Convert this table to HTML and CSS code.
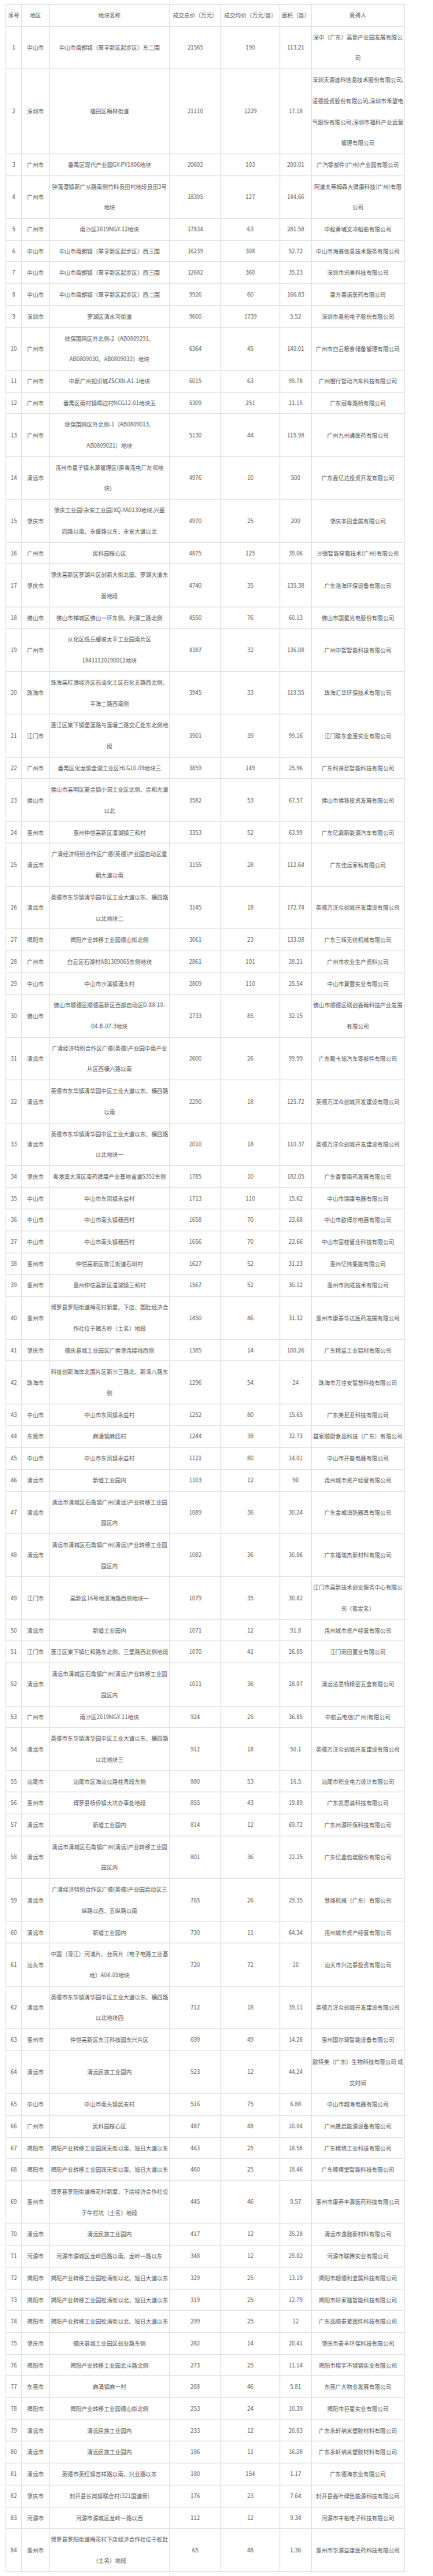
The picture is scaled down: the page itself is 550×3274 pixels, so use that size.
FILE: index.html
```html
<!DOCTYPE html>
<html lang="zh-CN">
<head>
<meta charset="utf-8">
<title>广东省工业用地成交表</title>
<link rel="stylesheet" href="styles.css">
</head>
<body>
<div class="page">
<table class="land-table">
<colgroup>
<col class="c-no"><col class="c-area"><col class="c-name"><col class="c-total"><col class="c-avg"><col class="c-size"><col class="c-buyer">
</colgroup>
<thead>
<tr><th>序号</th><th>地区</th><th>地块名称</th><th>成交总价（万元）</th><th>成交均价（万元/亩）</th><th>面积（亩）</th><th>竞得人</th></tr>
</thead>
<tbody>
<tr><td>1</td><td>中山市</td><td>中山市南朗镇（翠亨新区起步区）东二围</td><td>21565</td><td>190</td><td>113.21</td><td>深中（广东）高新产业园发展有限公<br>司</td></tr>
<tr><td>2</td><td>深圳市</td><td>福田区梅林街道</td><td>21110</td><td>1229</td><td>17.18</td><td>深圳天源迪科信息技术股份有限公司,<br>诺德投资股份有限公司,深圳市禾望电<br>气股份有限公司,深圳市福科产业运营<br>管理有限公司</td></tr>
<tr><td>3</td><td>广州市</td><td>番禺区现代产业园GY-PY1806地块</td><td>20602</td><td>103</td><td>200.01</td><td>广汽零部件(广州)产业园有限公司</td></tr>
<tr><td>4</td><td>广州市</td><td>钟落潭镇新广从路南侧竹料良田村地段良田3号<br>地块</td><td>18395</td><td>127</td><td>144.66</td><td>阿道夫蒂姆森大健康科技(广州)有限<br>公司</td></tr>
<tr><td>5</td><td>广州市</td><td>南沙区2019NGY-12地块</td><td>17834</td><td>63</td><td>281.58</td><td>中船黄埔文冲船舶有限公司</td></tr>
<tr><td>6</td><td>中山市</td><td>中山市南朗镇（翠亨新区起步区）西三围</td><td>16239</td><td>308</td><td>52.72</td><td>中山市海雅信息技术服务有限公司</td></tr>
<tr><td>7</td><td>中山市</td><td>中山市南朗镇（翠亨新区起步区）西三围</td><td>12682</td><td>360</td><td>35.23</td><td>深圳市讯美科技有限公司</td></tr>
<tr><td>8</td><td>中山市</td><td>中山市南朗镇（翠亨新区起步区）西二围</td><td>9926</td><td>60</td><td>166.83</td><td>康方喜诺医药有限公司</td></tr>
<tr><td>9</td><td>深圳市</td><td>罗湖区清水河街道</td><td>9600</td><td>1739</td><td>5.52</td><td>深圳市奥拓电子股份有限公司</td></tr>
<tr><td>10</td><td>广州市</td><td>综保围网区外北侧-2（AB0809291、<br>AB0809030、AB0809033）地块</td><td>6364</td><td>45</td><td>140.01</td><td>广州市白云粮食储备管理有限公司</td></tr>
<tr><td>11</td><td>广州市</td><td>中新广州知识城ZSCXN-A1-1地块</td><td>6015</td><td>63</td><td>95.78</td><td>广州橙行智动汽车科技有限公司</td></tr>
<tr><td>12</td><td>广州市</td><td>番禺区南村镇樟边村NCG12-01地块五</td><td>5309</td><td>251</td><td>21.15</td><td>广东冠粤路桥有限公司</td></tr>
<tr><td>13</td><td>广州市</td><td>综保围网区外北侧-1（AB0809013、<br>AB0809021）地块</td><td>5130</td><td>44</td><td>115.98</td><td>广州九州通医药有限公司</td></tr>
<tr><td>14</td><td>清远市</td><td>连州市星子镇水源管理区(原粤连电厂灰坝地<br>块）</td><td>4976</td><td>10</td><td>500</td><td>广东鑫亿达投资开发有限公司</td></tr>
<tr><td>15</td><td>肇庆市</td><td>肇庆工业园(永安工业园)XQ-YA0130地块,兴盛<br>四路以南、永盛路以东、永安大道以北</td><td>4970</td><td>25</td><td>200</td><td>肇庆本田金属有限公司</td></tr>
<tr><td>16</td><td>广州市</td><td>民科园核心区</td><td>4875</td><td>125</td><td>39.06</td><td>沙驰智能穿戴技术(广州)有限公司</td></tr>
<tr><td>17</td><td>肇庆市</td><td>肇庆高新区罗湖片区创新大街北面、罗湖大道东<br>面地段</td><td>4740</td><td>35</td><td>135.38</td><td>广东浩海环保设备有限公司</td></tr>
<tr><td>18</td><td>佛山市</td><td>佛山市禅城区佛山一环东侧、利源二路北侧</td><td>4550</td><td>76</td><td>60.13</td><td>佛山市国星光电股份有限公司</td></tr>
<tr><td>19</td><td>广州市</td><td>从化区低丘缓坡太平工业园南片区<br>18411120190012地块</td><td>4387</td><td>32</td><td>136.08</td><td>广州中智智能科技有限公司</td></tr>
<tr><td>20</td><td>珠海市</td><td>珠海高栏港经济区石油化工区石化五路西北侧、<br>平海二路西南侧</td><td>3945</td><td>33</td><td>119.55</td><td>珠海汇华环保技术有限公司</td></tr>
<tr><td>21</td><td>江门市</td><td>蓬江区棠下镇堡莲路与莲塘二路交汇处东北侧地<br>段</td><td>3901</td><td>39</td><td>99.16</td><td>江门联东金蓬实业有限公司</td></tr>
<tr><td>22</td><td>广州市</td><td>番禺区化龙镇金湖工业区HLG10-09地块三</td><td>3859</td><td>149</td><td>25.96</td><td>广东科徕尼智能科技有限公司</td></tr>
<tr><td>23</td><td>佛山市</td><td>佛山市高明区更合镇小洞工业区北侧、合和大道<br>以北</td><td>3582</td><td>53</td><td>67.57</td><td>佛山市佛铁投资发展有限公司</td></tr>
<tr><td>24</td><td>惠州市</td><td>惠州仲恺高新区潼湖镇三和村</td><td>3353</td><td>52</td><td>63.99</td><td>广东亿鼎新能源汽车有限公司</td></tr>
<tr><td>25</td><td>清远市</td><td>广清经济特别合作区广德(英德)产业园启动区星<br>朝大道以南</td><td>3155</td><td>28</td><td>112.64</td><td>广东佳远家私有限公司</td></tr>
<tr><td>26</td><td>清远市</td><td>英德市东华镇清华园中区工业大道以东、横四路<br>以北地块二</td><td>3145</td><td>18</td><td>172.74</td><td>英德万洋众创城开发建设有限公司</td></tr>
<tr><td>27</td><td>揭阳市</td><td>揭阳产业转移工业园德山街北侧</td><td>3061</td><td>23</td><td>133.08</td><td>广东三辉无纺机械有限公司</td></tr>
<tr><td>28</td><td>广州市</td><td>白云区石湖村AB1309065东侧地块</td><td>2861</td><td>101</td><td>28.21</td><td>广州市农业生产资料公司</td></tr>
<tr><td>29</td><td>中山市</td><td>中山市沙溪镇涌头村</td><td>2809</td><td>110</td><td>25.54</td><td>中山市景盟实业有限公司</td></tr>
<tr><td>30</td><td>佛山市</td><td>佛山市顺德区顺德高新区西部启动区D-X8-10-<br>04-B-07-3地块</td><td>2733</td><td>85</td><td>32.15</td><td>佛山市顺德区硕创鑫翰科技产业发展<br>有限公司</td></tr>
<tr><td>31</td><td>清远市</td><td>广清经济特别合作区广德(英德)产业园中南产业<br>片区西横六路以南</td><td>2600</td><td>26</td><td>99.99</td><td>广东戴卡旭汽车零部件有限公司</td></tr>
<tr><td>32</td><td>清远市</td><td>英德市东华镇清华园中区工业大道以东、横四路<br>以南</td><td>2290</td><td>18</td><td>125.72</td><td>英德万洋众创城开发建设有限公司</td></tr>
<tr><td>33</td><td>清远市</td><td>英德市东华镇清华园中区工业大道以东、横四路<br>以北地块一</td><td>2010</td><td>18</td><td>110.37</td><td>英德万洋众创城开发建设有限公司</td></tr>
<tr><td>34</td><td>肇庆市</td><td>粤港澳大湾区南药健康产业基地省道S352东侧</td><td>1785</td><td>10</td><td>182.05</td><td>广东香雪南药发展有限公司</td></tr>
<tr><td>35</td><td>中山市</td><td>中山市东凤镇永益村</td><td>1713</td><td>110</td><td>15.62</td><td>中山市瑞康电器有限公司</td></tr>
<tr><td>36</td><td>中山市</td><td>中山市南头镇穗西村</td><td>1658</td><td>70</td><td>23.68</td><td>中山市欧博尔电器有限公司</td></tr>
<tr><td>37</td><td>中山市</td><td>中山市南头镇穗西村</td><td>1656</td><td>70</td><td>23.66</td><td>中山市富桂管业科技有限公司</td></tr>
<tr><td>38</td><td>惠州市</td><td>仲恺高新区陈江街道石圳村</td><td>1627</td><td>52</td><td>31.23</td><td>惠州亿纬集能有限公司</td></tr>
<tr><td>39</td><td>惠州市</td><td>惠州仲恺高新区潼湖镇三和村</td><td>1567</td><td>52</td><td>30.12</td><td>惠州市则成技术有限公司</td></tr>
<tr><td>40</td><td>惠州市</td><td>博罗县罗阳街道梅花村新屋、下店、围肚经济合<br>作社位于猪古岭（土名）地段</td><td>1450</td><td>46</td><td>31.32</td><td>惠州市康泰华达医药发展有限公司</td></tr>
<tr><td>41</td><td>肇庆市</td><td>德庆县城工业园区广佛肇连接线西侧</td><td>1385</td><td>14</td><td>100.26</td><td>广东精益工业铝材有限公司</td></tr>
<tr><td>42</td><td>珠海市</td><td>科技创新海岸北围片区新沙三路北、新湾八路东<br>侧</td><td>1296</td><td>54</td><td>24</td><td>珠海市万佳安智慧科技有限公司</td></tr>
<tr><td>43</td><td>中山市</td><td>中山市东凤镇永益村</td><td>1252</td><td>80</td><td>15.65</td><td>广东美尼亚科技有限公司</td></tr>
<tr><td>44</td><td>东莞市</td><td>麻涌镇麻四村</td><td>1244</td><td>38</td><td>32.73</td><td>碧家顺厨食品科技（广东）有限公司</td></tr>
<tr><td>45</td><td>中山市</td><td>中山市东凤镇永益村</td><td>1121</td><td>80</td><td>14.01</td><td>中山市开普电器有限公司</td></tr>
<tr><td>46</td><td>清远市</td><td>新墟工业园内</td><td>1103</td><td>12</td><td>90</td><td>连州城市资产经营有限公司</td></tr>
<tr><td>47</td><td>清远市</td><td>清远市清城区石角镇广州(清远)产业转移工业园<br>园区内</td><td>1089</td><td>36</td><td>30.24</td><td>广东金威消防器具有限公司</td></tr>
<tr><td>48</td><td>清远市</td><td>清远市清城区石角镇广州(清远)产业转移工业园<br>园区内</td><td>1082</td><td>36</td><td>30.06</td><td>广东福瑞杰新材料有限公司</td></tr>
<tr><td>49</td><td>江门市</td><td>高新区16号地滨海路西侧地块一</td><td>1079</td><td>35</td><td>30.82</td><td>江门市高新技术创业服务中心有限公<br>司（暂定名）</td></tr>
<tr><td>50</td><td>清远市</td><td>新墟工业园内</td><td>1071</td><td>12</td><td>91.8</td><td>连州城市资产经营有限公司</td></tr>
<tr><td>51</td><td>江门市</td><td>蓬江区棠下镇仁和路东北侧、三堡路西北侧地段</td><td>1070</td><td>41</td><td>26.05</td><td>江门雨田置业有限公司</td></tr>
<tr><td>52</td><td>清远市</td><td>清远市清城区石角镇广州(清远)产业转移工业园<br>园区内</td><td>1011</td><td>36</td><td>28.07</td><td>清远法思特精密五金有限公司</td></tr>
<tr><td>53</td><td>广州市</td><td>南沙区2019NGY-11地块</td><td>924</td><td>25</td><td>36.85</td><td>中航云电信(广州)有限公司</td></tr>
<tr><td>54</td><td>清远市</td><td>英德市东华镇清华园中区工业大道以东、横四路<br>以北地块三</td><td>912</td><td>18</td><td>50.1</td><td>英德万洋众创城开发建设有限公司</td></tr>
<tr><td>55</td><td>汕尾市</td><td>汕尾市区海汕公路桂青段东侧</td><td>880</td><td>53</td><td>16.5</td><td>汕尾市积业电力设计有限公司</td></tr>
<tr><td>56</td><td>惠州市</td><td>博罗县杨侨镇大坑办事处地段</td><td>855</td><td>43</td><td>19.89</td><td>广东凯思诚科技有限公司</td></tr>
<tr><td>57</td><td>清远市</td><td>新墟工业园内</td><td>814</td><td>12</td><td>69.72</td><td>广东州源环保科技有限公司</td></tr>
<tr><td>58</td><td>清远市</td><td>清远市清城区石角镇广州(清远)产业转移工业园<br>园区内</td><td>801</td><td>36</td><td>22.25</td><td>广东亿晶包装股份有限公司</td></tr>
<tr><td>59</td><td>清远市</td><td>广清经济特别合作区广德(英德)产业园启动区三<br>纵路以西、五纵路以南</td><td>765</td><td>26</td><td>29.35</td><td>慧雄机械（广东）有限公司</td></tr>
<tr><td>60</td><td>清远市</td><td>新墟工业园内</td><td>730</td><td>11</td><td>64.34</td><td>连州城市资产经营有限公司</td></tr>
<tr><td>61</td><td>汕头市</td><td>中国（濠江）河浦片、台商片（电子电路工业基<br>地）A04-03地块</td><td>720</td><td>72</td><td>10</td><td>汕头市兴达泰投资有限公司</td></tr>
<tr><td>62</td><td>清远市</td><td>英德市东华镇清华园中区工业大道以东、横四路<br>以北地块四</td><td>712</td><td>18</td><td>39.11</td><td>英德万洋众创城开发建设有限公司</td></tr>
<tr><td>63</td><td>惠州市</td><td>仲恺高新区东江科技园东兴片区</td><td>699</td><td>49</td><td>14.28</td><td>惠州国尔琦智能设备有限公司</td></tr>
<tr><td>64</td><td>清远市</td><td>清远民族工业园内</td><td>523</td><td>12</td><td>44.24</td><td>欧特美（广东）生物科技有限公司 成<br>交时间</td></tr>
<tr><td>65</td><td>中山市</td><td>中山市南头镇民安村</td><td>516</td><td>75</td><td>6.88</td><td>中山市越海电器有限公司</td></tr>
<tr><td>66</td><td>广州市</td><td>民科园核心区</td><td>487</td><td>48</td><td>10.04</td><td>广州晟启能源设备有限公司</td></tr>
<tr><td>67</td><td>揭阳市</td><td>揭阳产业转移工业园润天街以南、旭日大道以东</td><td>463</td><td>25</td><td>18.58</td><td>广东稀晴工业科技有限公司</td></tr>
<tr><td>68</td><td>揭阳市</td><td>揭阳产业转移工业园润天街以南、旭日大道以东</td><td>460</td><td>25</td><td>18.46</td><td>广东棒棒堂智能科技有限公司</td></tr>
<tr><td>69</td><td>惠州市</td><td>博罗县罗阳街道梅花村新屋、下店经济合作社位<br>于牛栏坑（土名）地段</td><td>445</td><td>46</td><td>9.57</td><td>惠州市康养丰源医药科技有限公司</td></tr>
<tr><td>70</td><td>清远市</td><td>清远民族工业园内</td><td>417</td><td>12</td><td>35.28</td><td>清远市逸驰新材料有限公司</td></tr>
<tr><td>71</td><td>河源市</td><td>河源市源城区龙岭四路以南、龙岭一路以东</td><td>348</td><td>12</td><td>29.02</td><td>河源市联腾实业有限公司</td></tr>
<tr><td>72</td><td>揭阳市</td><td>揭阳产业转移工业园松涛街以北、旭日大道以东</td><td>329</td><td>25</td><td>13.19</td><td>揭阳市超德利金属科技有限公司</td></tr>
<tr><td>73</td><td>揭阳市</td><td>揭阳产业转移工业园松涛街以北、旭日大道以东</td><td>319</td><td>25</td><td>12.79</td><td>揭阳市好家福智能科技有限公司</td></tr>
<tr><td>74</td><td>揭阳市</td><td>揭阳产业转移工业园松涛街以北、旭日大道以东</td><td>299</td><td>25</td><td>12</td><td>广东品顺泰紧固件科技有限公司</td></tr>
<tr><td>75</td><td>肇庆市</td><td>德庆县城工业园区创业路东侧</td><td>282</td><td>14</td><td>20.41</td><td>肇庆市麦丰环保科技有限公司</td></tr>
<tr><td>76</td><td>揭阳市</td><td>揭阳产业转移工业园北斗路北侧</td><td>273</td><td>25</td><td>11.14</td><td>揭阳市榕宇不锈钢实业有限公司</td></tr>
<tr><td>77</td><td>东莞市</td><td>麻涌镇麻一村</td><td>268</td><td>46</td><td>5.81</td><td>东莞广大物业发展有限公司</td></tr>
<tr><td>78</td><td>揭阳市</td><td>揭阳产业转移工业园德山街北侧</td><td>253</td><td>24</td><td>10.39</td><td>揭阳市巨星实业有限公司</td></tr>
<tr><td>79</td><td>清远市</td><td>清远民族工业园内</td><td>233</td><td>12</td><td>20.03</td><td>广东永轩纳米塑胶材料有限公司</td></tr>
<tr><td>80</td><td>清远市</td><td>清远民族工业园内</td><td>186</td><td>11</td><td>16.28</td><td>广东永轩纳米塑胶材料有限公司</td></tr>
<tr><td>81</td><td>清远市</td><td>英德市英红镇吉祥路以南、兴业路以东</td><td>180</td><td>154</td><td>1.17</td><td>广东德海农业有限公司</td></tr>
<tr><td>82</td><td>肇庆市</td><td>封开县长岗镇联合村(321国道旁)</td><td>176</td><td>23</td><td>7.64</td><td>封开县鑫叶绿色能源科技有限公司</td></tr>
<tr><td>83</td><td>河源市</td><td>河源市源城区龙岭一路以西</td><td>112</td><td>12</td><td>9.34</td><td>河源市丰裕电子科技有限公司</td></tr>
<tr><td>84</td><td>惠州市</td><td>博罗县罗阳街道梅花村下店经济合作社位于蛇肚<br>（土名）地段</td><td>65</td><td>48</td><td>1.36</td><td>惠州市华源益康医药科技有限公司</td></tr>
</tbody>
</table>
</div>
</body>
</html>
```

FILE: styles.css
```css
html, body {
  margin: 0;
  padding: 0;
  background: #ffffff;
}

.page {
  padding: 5px 0 0 7px;
}

.land-table {
  border-collapse: collapse;
  table-layout: fixed;
  width: 506px;
  font-family: "Noto Sans CJK SC", "Noto Sans", sans-serif;
  font-size: 7.1px;
  line-height: 26.7px;
  color: #555555;
}

.land-table th,
.land-table td {
  border: 1px solid #e3e3e3;
  padding: 0;
  text-align: center;
  vertical-align: middle;
  font-weight: normal;
  white-space: nowrap;
  overflow: hidden;
}

.c-no { width: 20px; }
.c-area { width: 35px; }
.c-name { width: 153px; }
.c-total { width: 65px; }
.c-avg { width: 75px; }
.c-size { width: 40px; }
.c-buyer { width: 118px; }
```
